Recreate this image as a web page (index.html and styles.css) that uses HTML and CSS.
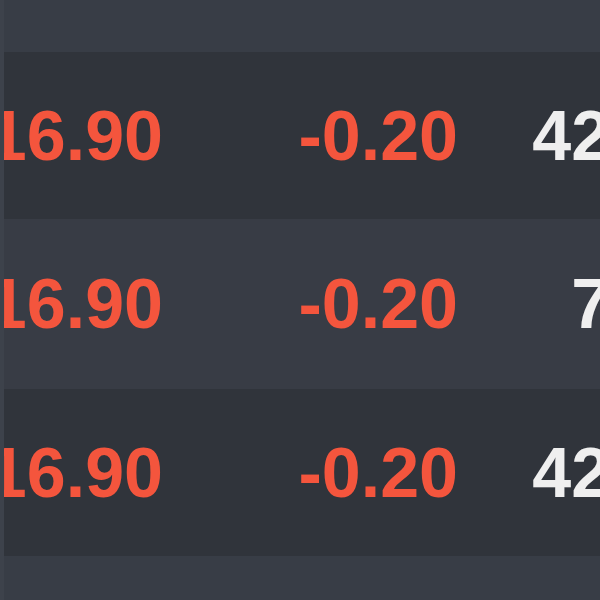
FILE: index.html
```html
<!DOCTYPE html>
<html>
<head>
<meta charset="utf-8">
<link rel="stylesheet" href="styles.css">
</head>
<body>
<div class="viewport">
  <div class="table">
    <div class="band"></div>
    <div class="row dark">
      <div class="cell down"><span>16.90</span></div>
      <div class="cell down"><span>-0.20</span></div>
      <div class="cell"><span>4256</span></div>
    </div>
    <div class="row light">
      <div class="cell down"><span>16.90</span></div>
      <div class="cell down"><span>-0.20</span></div>
      <div class="cell"><span>756</span></div>
    </div>
    <div class="row dark">
      <div class="cell down"><span>16.90</span></div>
      <div class="cell down"><span>-0.20</span></div>
      <div class="cell"><span>4256</span></div>
    </div>
  </div>
</div>
</body>
</html>
```
FILE: styles.css
```css
html, body {
  margin: 0;
  padding: 0;
  background: #383d46;
}
.viewport {
  width: 600px;
  height: 600px;
  overflow: hidden;
  border-left: 4px solid #3d424b;
  box-sizing: border-box;
}
.table {
  width: 700px;
  margin-left: -4px;
  font-family: "Liberation Sans", Arial, sans-serif;
  font-size: 70px;
  font-weight: 700;
}
.band {
  height: 52px;
}
.row {
  display: grid;
  grid-template-columns: 163px 295px 230px;
  align-items: center;
  height: 167px;
  padding-top: 0;
  box-sizing: border-box;
}
.row.dark { background: #30343b; }
.row.light { background: #383c45; height: 170px; }
.cell {
  display: flex;
  justify-content: flex-end;
  min-width: 0;
  color: #efefef;
  white-space: nowrap;
  filter: blur(0.6px);
}
.cell span {
  flex: none;
}
.cell.down { color: #f4553d; }
```
